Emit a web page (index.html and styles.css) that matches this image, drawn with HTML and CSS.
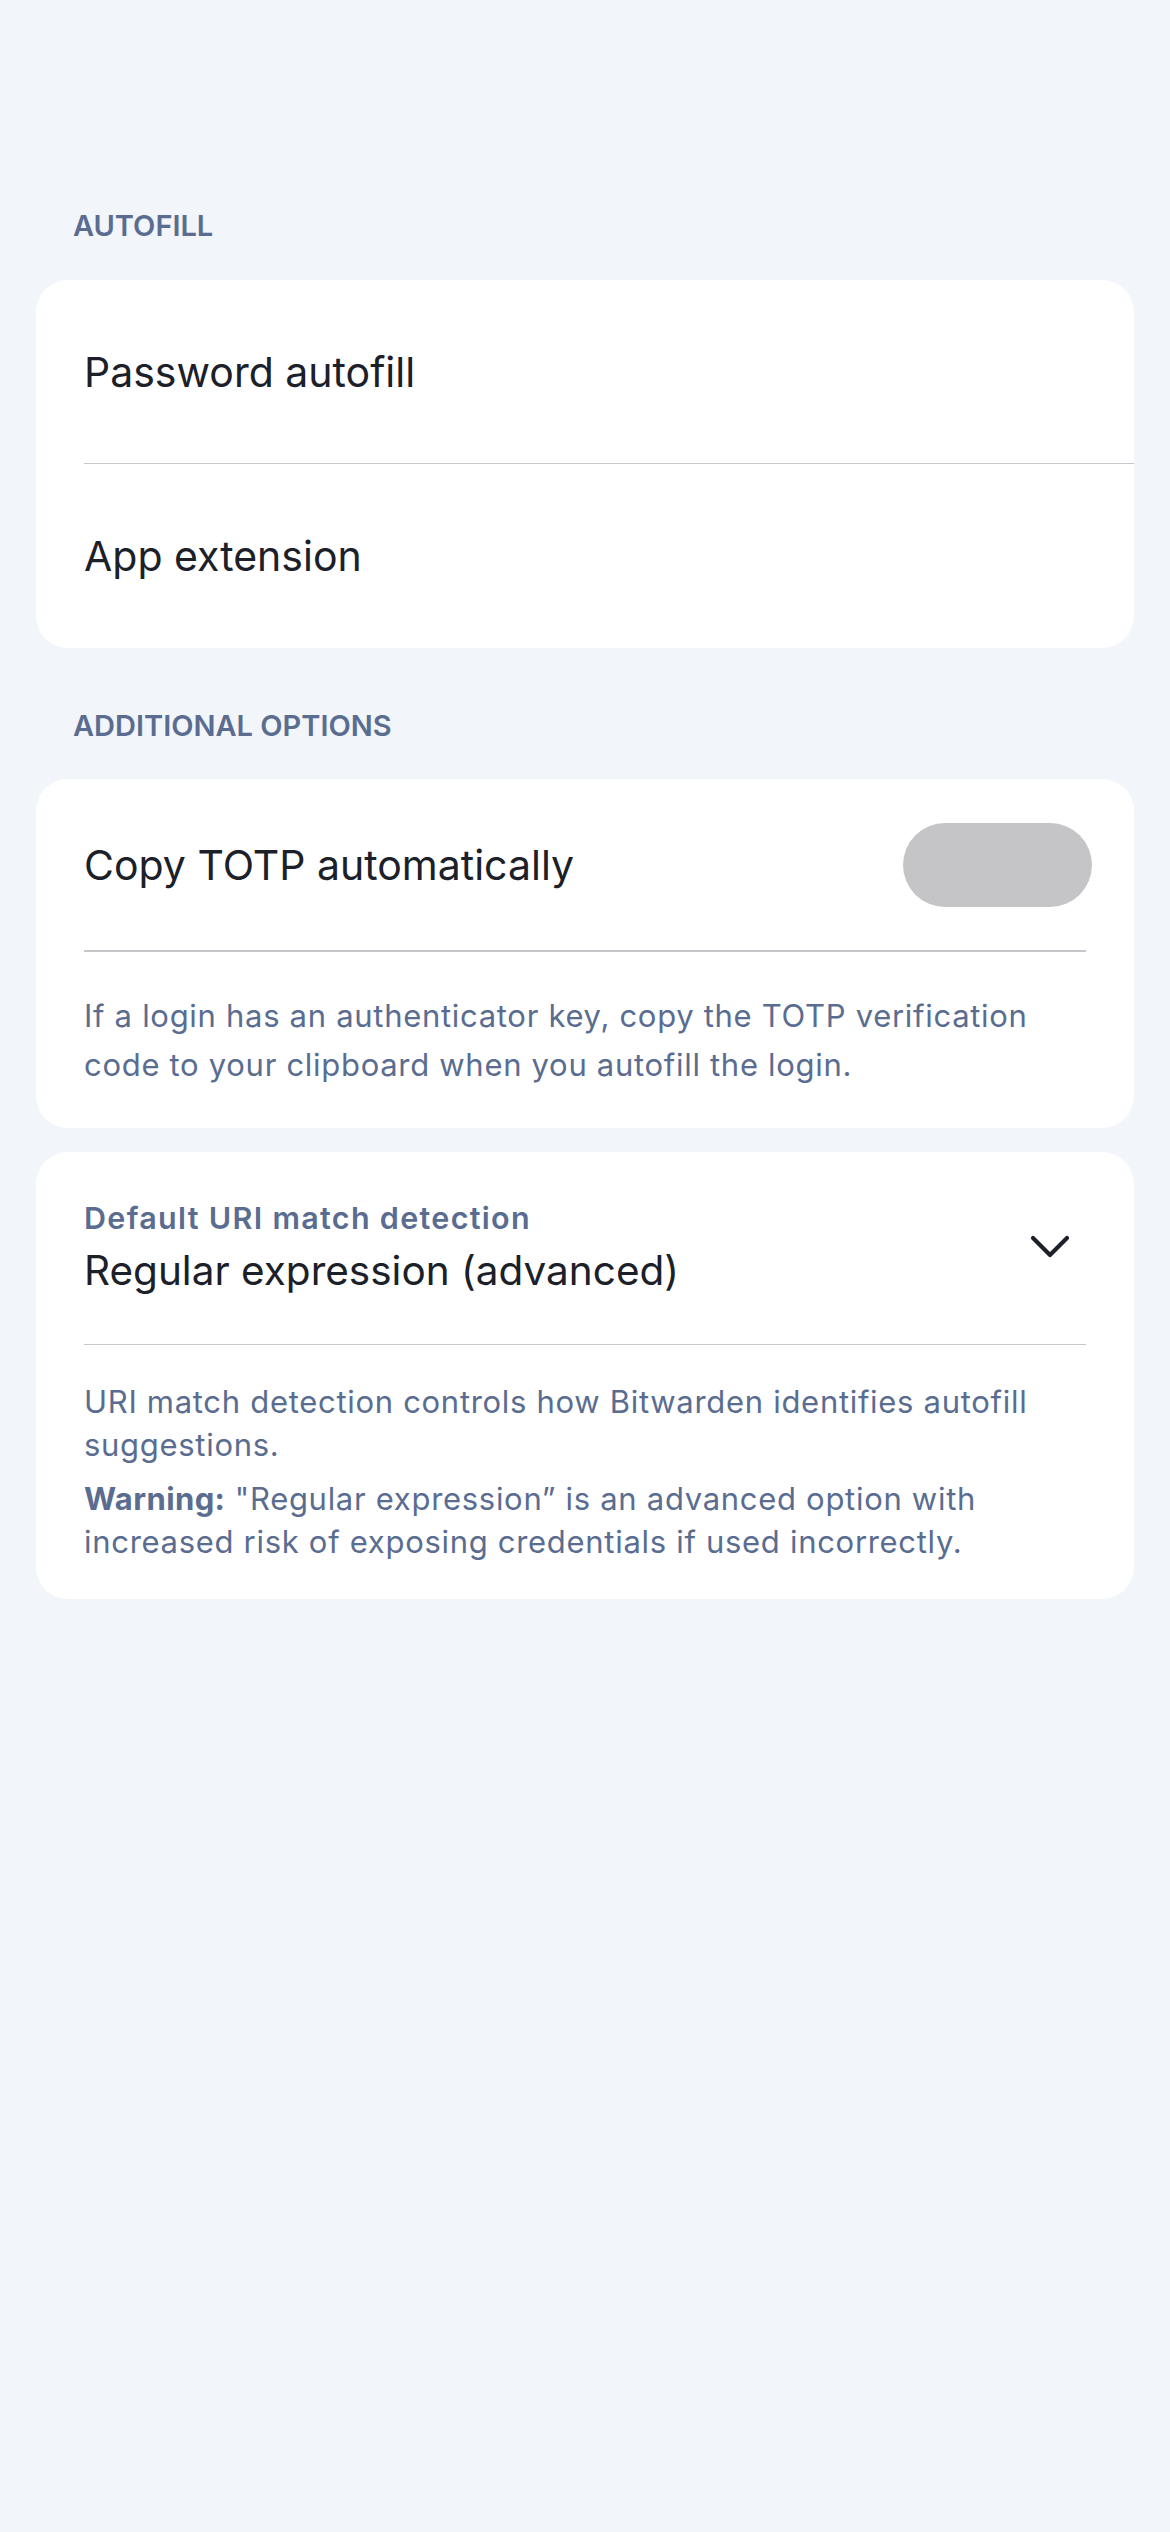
FILE: index.html
```html
<!DOCTYPE html>
<html lang="en">
<head>
<meta charset="utf-8">
<title>Autofill settings</title>
<link rel="stylesheet" href="styles.css">
</head>
<body>
<main class="page">
  <h2 class="section-title">AUTOFILL</h2>
  <section class="card">
    <div class="nav-row"><div class="nav-row-inner divided"><span class="row-text">Password autofill</span></div></div>
    <div class="nav-row"><div class="nav-row-inner"><span class="row-text">App extension</span></div></div>
  </section>

  <h2 class="section-title second">ADDITIONAL OPTIONS</h2>
  <section class="card">
    <div class="toggle-row">
      <span class="row-text">Copy TOTP automatically</span>
      <span class="toggle" role="switch" aria-checked="false"></span>
    </div>
    <div class="divider"></div>
    <p class="footnote totp-note">If a login has an authenticator key, copy the TOTP verification code to your clipboard when you autofill the login.</p>
  </section>

  <section class="card card-gap">
    <div class="picker-row">
      <div class="picker-text">
        <span class="picker-label">Default URI match detection</span>
        <span class="picker-value">Regular expression (advanced)</span>
      </div>
      <svg class="chevron" width="48" height="48" viewBox="0 0 48 48" aria-hidden="true">
        <path d="M7 15 L24 32 L41 15" fill="none" stroke="#1B2029" stroke-width="4.2" stroke-linecap="round" stroke-linejoin="round"/>
      </svg>
    </div>
    <div class="divider"></div>
    <div class="uri-notes">
      <p class="footnote uri-note">URI match detection controls how Bitwarden identifies autofill suggestions.</p>
      <p class="footnote uri-note"><b class="warn">Warning:</b> "Regular expression” is an advanced option with increased risk of exposing credentials if used incorrectly.</p>
    </div>
  </section>
</main>
</body>
</html>
```

FILE: styles.css
```css
* { box-sizing: border-box; }

html, body {
  margin: 0;
  padding: 0;
  background: #F2F5F9;
}

body {
  font-family: Inter, "Noto Sans", "DejaVu Sans", sans-serif;
  color: #1B2029;
  min-height: 2532px;
}

.page {
  padding: 208px 36px 0;
  display: flex;
  flex-direction: column;
}

.section-title {
  margin: 0 0 36px;
  padding-left: 37px;
  font-size: 29px;
  line-height: 36px;
  font-weight: 600;
  color: #5A6D91;
  letter-spacing: 0;
}

.section-title.second {
  margin-top: 60px;
  margin-bottom: 35px;
}

.card {
  background: #FFFFFF;
  border-radius: 32px;
  overflow: hidden;
}

.card-gap {
  margin-top: 24px;
}

.nav-row {
  padding-left: 48px;
}

.nav-row-inner {
  height: 184px;
  display: flex;
  align-items: center;
}

.nav-row-inner.divided {
  border-bottom: 1.5px solid #C8C8CC;
}

.row-text {
  font-size: 41px;
  line-height: 48px;
  color: #1B2029;
}

.toggle-row {
  height: 171px;
  display: flex;
  align-items: center;
  justify-content: space-between;
  padding: 0 42px 0 48px;
}

.toggle {
  width: 189px;
  height: 84px;
  border-radius: 42px;
  background: #C5C5C7;
}

.divider {
  height: 1.5px;
  margin: 0 48px;
  background: #C8C8CC;
}

.footnote {
  margin: 0;
  color: #5A6D91;
  font-size: 31px;
  letter-spacing: 0.7px;
}

.totp-note {
  padding: 39px 48px 39px;
  line-height: 49px;
}

.picker-row {
  display: flex;
  align-items: center;
  justify-content: space-between;
  padding: 48px 60px 49px 48px;
}

.picker-text {
  display: flex;
  flex-direction: column;
  gap: 11px;
}

.picker-label {
  font-size: 30.5px;
  line-height: 36px;
  font-weight: 600;
  letter-spacing: 1.3px;
  color: #5A6D91;
}

.picker-value {
  font-size: 40.5px;
  line-height: 48px;
  color: #1B2029;
}

.chevron {
  display: block;
  flex: none;
}

.uri-notes {
  display: flex;
  flex-direction: column;
  gap: 11px;
  padding: 35px 48px 36px;
}

.uri-note {
  line-height: 43px;
}

.warn {
  font-weight: 700;
  letter-spacing: 0.4px;
}
```
